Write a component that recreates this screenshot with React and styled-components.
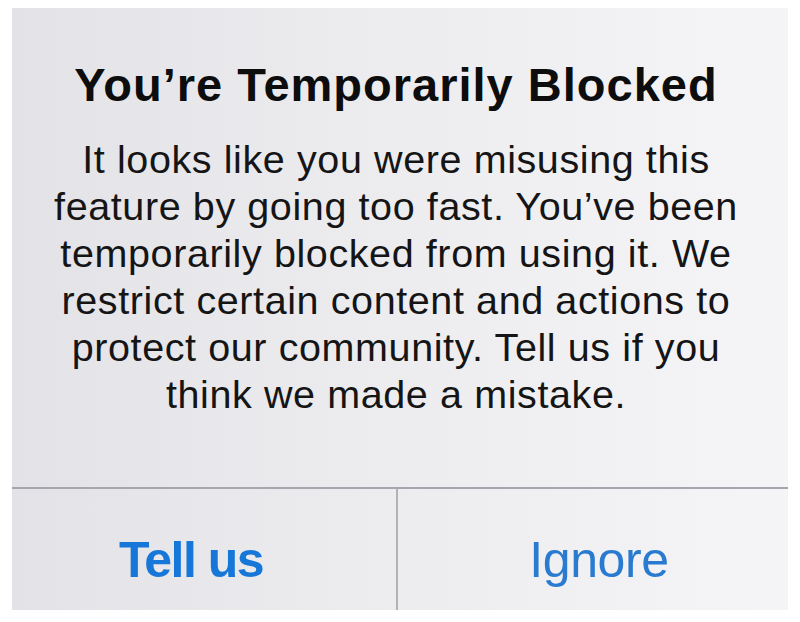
import React from "react";
import styled, { createGlobalStyle } from "styled-components";

const GlobalStyle = createGlobalStyle`
  html, body {
    margin: 0;
    padding: 0;
    background: #ffffff;
  }
  body {
    font-family: "Liberation Sans", Arial, Helvetica, sans-serif;
  }
`;

const Page = styled.div`
  width: 800px;
  height: 622px;
  box-sizing: border-box;
  padding: 8px 12px 12px 12px;
  background: #ffffff;
`;

const Alert = styled.div`
  height: 602px;
  display: flex;
  flex-direction: column;
  background: linear-gradient(90deg, #e3e3e7 0%, #ececef 45%, #f5f5f7 100%);
`;

const Content = styled.div`
  height: 479px;
  box-sizing: border-box;
  padding: 49px 8px 0 0;
  display: flex;
  flex-direction: column;
  align-items: center;
`;

const Title = styled.h1`
  margin: 0;
  font-size: 47px;
  line-height: 56px;
  font-weight: 700;
  letter-spacing: 1px;
  color: #0d0d0d;
  white-space: nowrap;
`;

const Message = styled.p`
  margin: 23px 0 0 0;
  font-size: 39.5px;
  line-height: 47px;
  font-weight: 400;
  letter-spacing: 0.6px;
  color: #151515;
  text-align: center;
  white-space: nowrap;
`;

const Divider = styled.div`
  height: 2px;
  background: #a6a6af;
`;

const Actions = styled.div`
  flex: 1;
  display: grid;
  grid-template-columns: 384px 2px 1fr;
`;

const Separator = styled.div`
  background: #b3b3b7;
`;

const ActionButton = styled.button`
  border: none;
  background: none;
  padding: ${(p) => (p.$primary ? "20px 26px 0 0" : "20px 0 0 12px")};
  margin: 0;
  display: flex;
  align-items: center;
  justify-content: center;
  font-family: "Liberation Sans", Arial, Helvetica, sans-serif;
  font-size: 50px;
  font-weight: ${(p) => (p.$primary ? 700 : 400)};
  letter-spacing: ${(p) => (p.$primary ? "-1.5px" : "-0.4px")};
  color: ${(p) => (p.$primary ? "#1777d9" : "#2a7bd0")};
  cursor: pointer;
`;

const lines = [
  "It looks like you were misusing this",
  "feature by going too fast. You\u2019ve been",
  "temporarily blocked from using it. We",
  "restrict certain content and actions to",
  "protect our community. Tell us if you",
  "think we made a mistake.",
];

export default function App() {
  return (
    <>
      <GlobalStyle />
      <Page>
        <Alert>
          <Content>
            <Title>You’re Temporarily Blocked</Title>
            <Message>
              {lines.map((line, i) => (
                <React.Fragment key={i}>
                  {line}
                  {i < lines.length - 1 && <br />}
                </React.Fragment>
              ))}
            </Message>
          </Content>
          <Divider />
          <Actions>
            <ActionButton $primary>Tell us</ActionButton>
            <Separator />
            <ActionButton>Ignore</ActionButton>
          </Actions>
        </Alert>
      </Page>
    </>
  );
}
